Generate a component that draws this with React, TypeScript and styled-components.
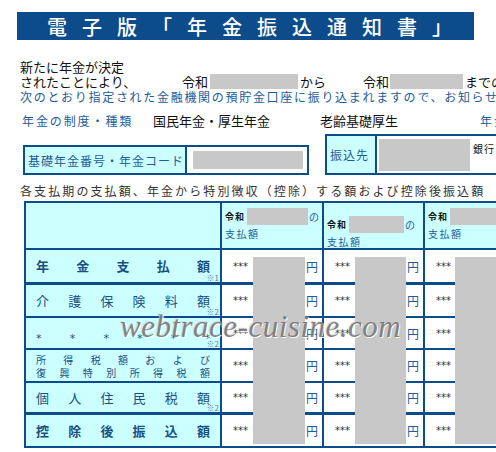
import React from "react";
import styled, { createGlobalStyle } from "styled-components";

const BLUE = "#0d4c8a";
const TEXT_BLUE = "#1d5c9a";
const LABEL_BLUE = "#1a4f82";
const CYAN = "#ccffff";
const GRAY = "#c8c8c8";
const JP = `"Noto Sans CJK JP", "Noto Sans", sans-serif`;

const Global = createGlobalStyle`
  html, body { margin: 0; padding: 0; background: #fff; overflow: hidden; }
  body { font-family: ${JP}; color: #111; }
`;

const Page = styled.div`
  width: 496px;
  height: 452px;
  overflow: hidden;
  padding-top: 12px;
  box-sizing: border-box;
`;

const TitleBar = styled.div`
  margin-left: 17px;
  width: 457px;
  height: 28px;
  background: ${BLUE};
  color: #fff;
  display: flex;
  align-items: center;
  padding-left: 30px;
  box-sizing: border-box;
  font-size: 20px;
  font-weight: 500;
  letter-spacing: 15px;
  white-space: nowrap;
  overflow: hidden;
`;

const Intro = styled.div`
  margin-top: 19px;
  padding-left: 20px;
`;

const Line = styled.div<{ $blue?: boolean; $spacing?: number; $size?: number }>`
  height: 15px;
  line-height: 15px;
  display: flex;
  align-items: center;
  white-space: nowrap;
  font-size: ${(p) => p.$size ?? 13}px;
  letter-spacing: ${(p) => p.$spacing ?? 0}px;
  color: ${(p) => (p.$blue ? TEXT_BLUE : "#111")};
`;

const Seg = styled.span<{ $w?: number; $blue?: boolean; $size?: number; $spacing?: number; $ml?: number }>`
  flex: none;
  width: ${(p) => (p.$w ? `${p.$w}px` : "auto")};
  margin-left: ${(p) => p.$ml ?? 0}px;
  color: ${(p) => (p.$blue ? TEXT_BLUE : "#111")};
  font-size: ${(p) => p.$size ?? 13}px;
  letter-spacing: ${(p) => p.$spacing ?? 0}px;
`;

const Redact = styled.span<{ $w: number; $h: number; $ml?: number }>`
  flex: none;
  display: inline-block;
  width: ${(p) => p.$w}px;
  height: ${(p) => p.$h}px;
  margin-left: ${(p) => p.$ml ?? 0}px;
  background: ${GRAY};
`;

const InfoLine = styled.div`
  margin-top: 9px;
  padding-left: 22px;
  display: flex;
  align-items: center;
  height: 15px;
  white-space: nowrap;
`;

const BoxesRow = styled.div`
  margin-top: 6px;
  margin-left: 23px;
  display: flex;
  align-items: flex-end;
  gap: 16px;
  width: 600px;
`;

const Box = styled.div<{ $w: number; $h: number }>`
  flex: none;
  width: ${(p) => p.$w}px;
  height: ${(p) => p.$h}px;
  border: 2px solid ${BLUE};
  box-sizing: border-box;
  display: flex;
  background: #fff;
`;

const BoxLabel = styled.div<{ $w: number }>`
  flex: none;
  width: ${(p) => p.$w}px;
  background: ${CYAN};
  border-right: 2px solid ${BLUE};
  box-sizing: border-box;
  display: flex;
  align-items: center;
  padding-left: 3px;
  color: ${TEXT_BLUE};
  font-size: 12px;
  letter-spacing: 1px;
  white-space: nowrap;
`;

const BoxBody = styled.div<{ $pl: number; $align?: string }>`
  flex: 1;
  display: flex;
  align-items: ${(p) => p.$align ?? "center"};
  padding-left: ${(p) => p.$pl}px;
  padding-top: ${(p) => (p.$align === "flex-start" ? 3 : 0)}px;
`;

const BankLabel = styled.span`
  font-size: 10px;
  letter-spacing: 1px;
  margin-left: 3px;
  margin-top: 2px;
  color: #111;
  white-space: nowrap;
`;

const Caption = styled.div`
  margin-top: 8px;
  padding-left: 20px;
  height: 15px;
  line-height: 15px;
  font-size: 12px;
  letter-spacing: 2.1px;
  color: #333;
  white-space: nowrap;
`;

const TableWrap = styled.div`
  position: relative;
  margin-top: 3px;
  margin-left: 24px;
  width: 600px;
`;

const Grid = styled.div`
  display: grid;
  grid-template-columns: 196px 102px 101px 180px;
  grid-template-rows: 47px 35px 33px 32px 33px 32px 33px;
  border-left: 2px solid ${BLUE};
  border-top: 2px solid ${BLUE};
`;

const Cell = styled.div<{ $cyan?: boolean; $bottom?: number }>`
  position: relative;
  box-sizing: border-box;
  border-right: 2px solid ${BLUE};
  border-bottom: ${(p) => p.$bottom ?? 2}px solid ${BLUE};
  background: ${(p) => (p.$cyan ? CYAN : "#fff")};
`;

const HeadCell = styled(Cell)<{ $top: number }>`
  display: flex;
  flex-direction: column;
  padding: ${(p) => p.$top}px 0 0 3px;
`;

const HeadTop = styled.div`
  display: flex;
  align-items: center;
  height: 17px;
  white-space: nowrap;
`;

const Reiwa = styled.span`
  font-size: 9px;
  font-weight: 700;
  letter-spacing: 1px;
  width: 22px;
  color: #111;
`;

const No = styled.span`
  font-size: 10px;
  color: ${TEXT_BLUE};
  margin-left: 1px;
`;

const PayLabel = styled.div`
  margin-top: 1px;
  font-size: 10px;
  letter-spacing: 1.5px;
  color: ${TEXT_BLUE};
  white-space: nowrap;
`;

const LabelCell = styled(Cell)<{ $bold?: boolean; $end?: boolean }>`
  display: flex;
  flex-direction: column;
  justify-content: ${(p) => (p.$end ? "flex-end" : "center")};
  padding: 0 10px ${(p) => (p.$end ? 2 : 0)}px 10px;
  color: ${LABEL_BLUE};
  font-weight: ${(p) => (p.$bold ? 700 : 400)};
`;

const Spread = styled.div<{ $size: number; $latin?: boolean }>`
  display: flex;
  justify-content: space-between;
  font-size: ${(p) => p.$size}px;
  line-height: ${(p) => p.$size + 3}px;
  font-family: ${(p) => (p.$latin ? `"DejaVu Sans", sans-serif` : JP)};
`;

const Note = styled.span`
  position: absolute;
  right: 1px;
  bottom: 0px;
  font-size: 8px;
  line-height: 9px;
  font-weight: 400;
  color: #5b7ea6;
`;

const DataCell = styled(Cell)`
  display: flex;
  align-items: center;
  justify-content: space-between;
  padding: 0 4px 0 11px;
`;

const Stars = styled.span`
  font-size: 10px;
  color: #333;
  font-family: "DejaVu Sans", sans-serif;
`;

const Yen = styled.span`
  font-size: 12px;
  color: ${TEXT_BLUE};
`;

const Cover = styled.div`
  position: absolute;
  top: 56px;
  height: 187px;
  background: ${GRAY};
`;

const Watermark = styled.div`
  position: absolute;
  left: 96px;
  top: 108px;
  font-family: "Liberation Serif", serif;
  font-style: italic;
  font-size: 31px;
  letter-spacing: 0.5px;
  color: rgba(110, 110, 110, 0.85);
  text-shadow: 1px 1px 0 rgba(255, 255, 255, 0.9), -1px -1px 0 rgba(200, 200, 200, 0.6);
  white-space: nowrap;
  pointer-events: none;
`;

type Row = {
  lines: string[][];
  size: number;
  bold?: boolean;
  note?: string;
  bottom?: number;
  end?: boolean;
  latin?: boolean;
};

const rows: Row[] = [
  { lines: [["年", "金", "支", "払", "額"]], size: 13, bold: true, note: "※1", bottom: 3 },
  { lines: [["介", "護", "保", "険", "料", "額"]], size: 13, note: "※2" },
  { lines: [["*", "*", "*", "*", "*", "*"]], size: 11, note: "※2", end: true, latin: true },
  {
    lines: [
      ["所", "得", "税", "額", "お", "よ", "び"],
      ["復", "興", "特", "別", "所", "得", "税", "額"],
    ],
    size: 10,
  },
  { lines: [["個", "人", "住", "民", "税", "額"]], size: 13, note: "※2", bottom: 3 },
  { lines: [["控", "除", "後", "振", "込", "額"]], size: 13, bold: true },
];

const heads = [
  { top: 5, gray: 61 },
  { top: 13, gray: 55 },
  { top: 5, gray: 80 },
];

export default function App() {
  return (
    <>
      <Global />
      <Page>
        <TitleBar>電子版「年金振込通知書」</TitleBar>

        <Intro>
          <Line>新たに年金が決定</Line>
          <Line>
            <Seg $w={162}>されたことにより、</Seg>
            <Seg>令和</Seg>
            <Redact $w={88} $h={15} $ml={2} />
            <Seg $w={63} $ml={2}>から</Seg>
            <Seg>令和</Seg>
            <Redact $w={73} $h={15} $ml={1} />
            <Seg $ml={2}>までの</Seg>
          </Line>
          <Line $blue $size={12} $spacing={1.7}>
            次のとおり指定された金融機関の預貯金口座に振り込まれますので、お知らせします。
          </Line>
        </Intro>

        <InfoLine>
          <Seg $w={131} $blue $size={12} $spacing={1.9}>年金の制度・種類</Seg>
          <Seg $w={167}>国民年金・厚生年金</Seg>
          <Seg $w={160}>老齢基礎厚生</Seg>
          <Seg $blue $size={12} $spacing={1.9}>年金の</Seg>
        </InfoLine>

        <BoxesRow>
          <Box $w={286} $h={30}>
            <BoxLabel $w={162}>基礎年金番号・年金コード</BoxLabel>
            <BoxBody $pl={6}>
              <Redact $w={110} $h={18} />
            </BoxBody>
          </Box>
          <Box $w={260} $h={41}>
            <BoxLabel $w={50}>振込先</BoxLabel>
            <BoxBody $pl={2} $align="flex-start">
              <Redact $w={91} $h={32} />
              <BankLabel>銀行</BankLabel>
            </BoxBody>
          </Box>
        </BoxesRow>

        <Caption>各支払期の支払額、年金から特別徴収（控除）する額および控除後振込額</Caption>

        <TableWrap>
          <Grid>
            <Cell $cyan />
            {heads.map((h, i) => (
              <HeadCell key={i} $cyan $top={h.top}>
                <HeadTop>
                  <Reiwa>令和</Reiwa>
                  <Redact $w={h.gray} $h={17} />
                  <No>の</No>
                </HeadTop>
                <PayLabel>支払額</PayLabel>
              </HeadCell>
            ))}
            {rows.map((r, ri) => (
              <React.Fragment key={ri}>
                <LabelCell $cyan $bold={r.bold} $bottom={r.bottom} $end={r.end}>
                  {r.lines.map((l, li) => (
                    <Spread key={li} $size={r.size} $latin={r.latin}>
                      {l.map((c, ci) => (
                        <span key={ci}>{c}</span>
                      ))}
                    </Spread>
                  ))}
                  {r.note && <Note>{r.note}</Note>}
                </LabelCell>
                {[0, 1, 2].map((ci) => (
                  <DataCell key={ci} $bottom={r.bottom}>
                    <Stars>***</Stars>
                    <Yen>円</Yen>
                  </DataCell>
                ))}
              </React.Fragment>
            ))}
          </Grid>
          <Cover style={{ left: 229, width: 52 }} />
          <Cover style={{ left: 331, width: 51 }} />
          <Cover style={{ left: 431, width: 70 }} />
          <Watermark>webtrace-cuisine.com</Watermark>
        </TableWrap>
      </Page>
    </>
  );
}
